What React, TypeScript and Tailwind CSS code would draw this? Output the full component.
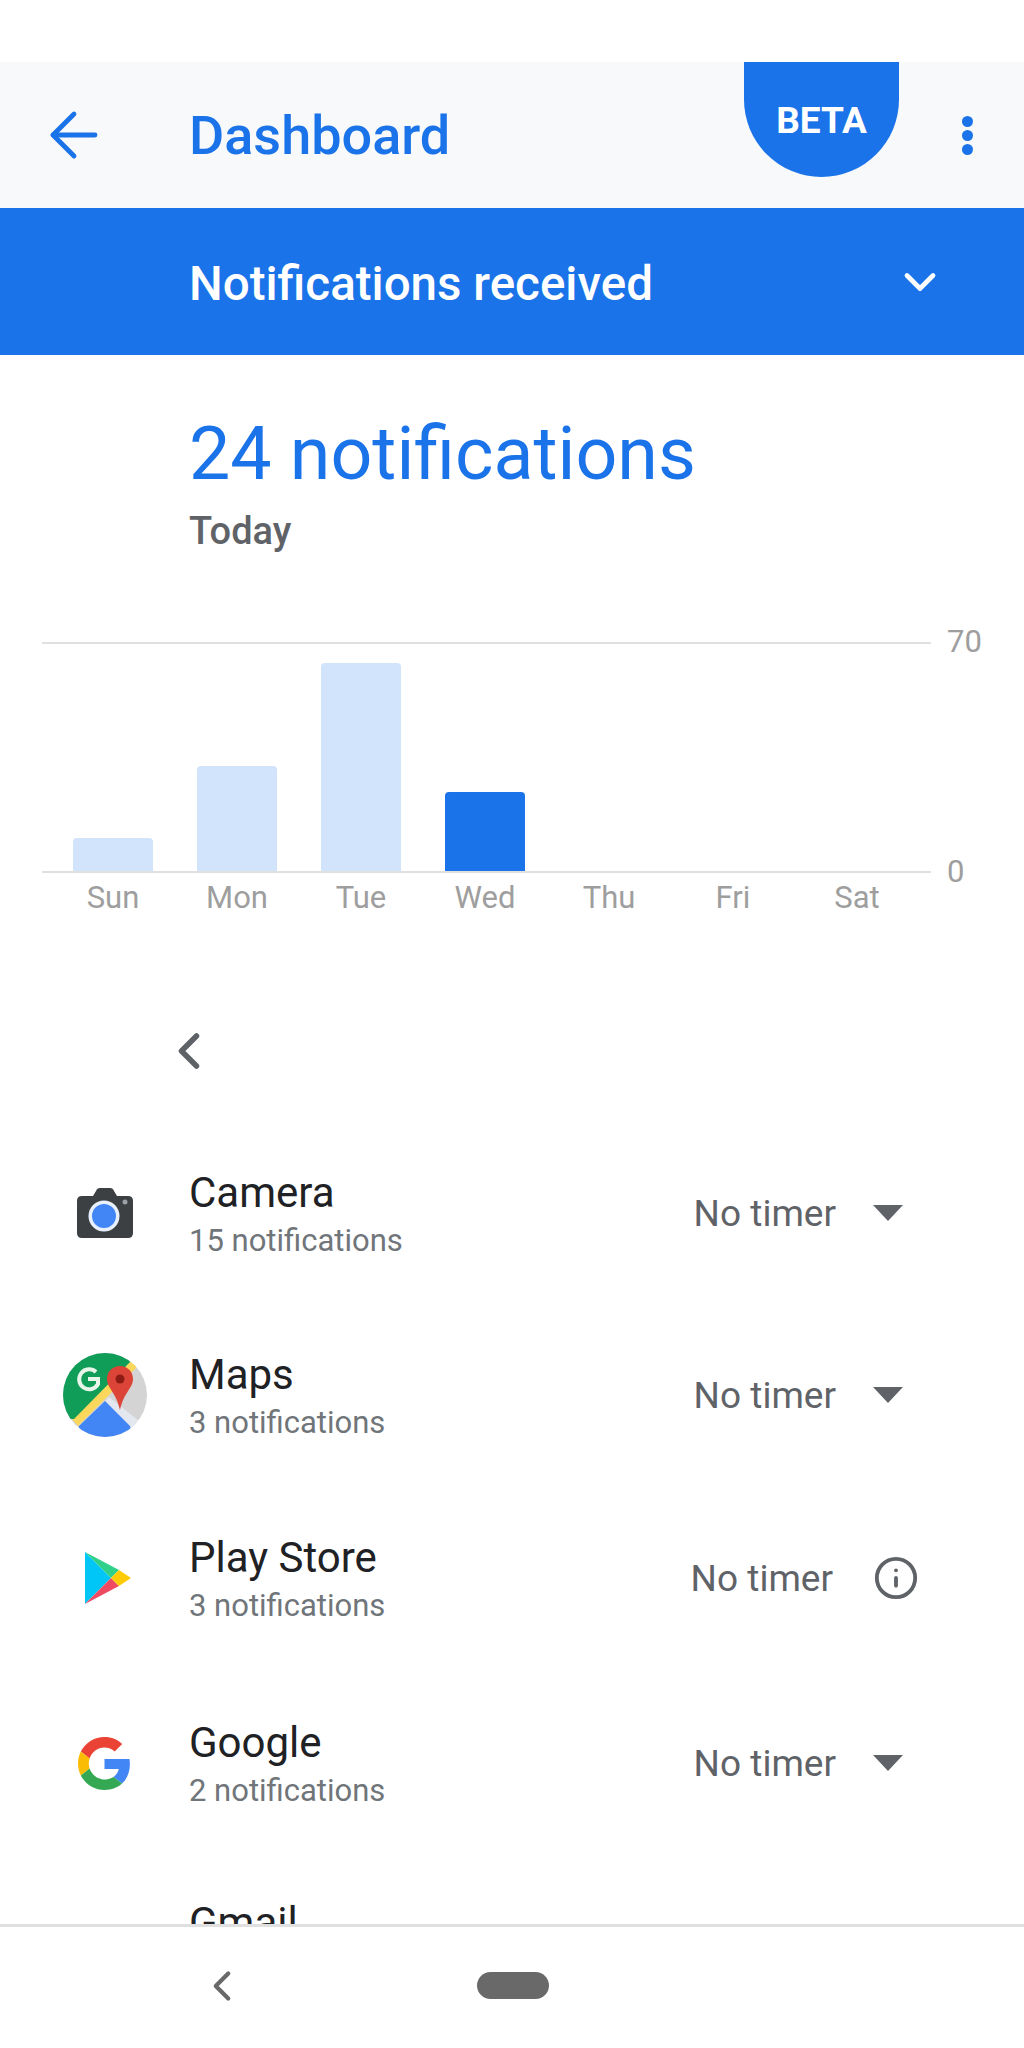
import { ArrowLeft, ChevronDown, ChevronLeft, Info } from 'lucide-react';

const days = [
  { label: 'Sun', height: 'h-[33px]', color: 'bg-[#d2e3fc]' },
  { label: 'Mon', height: 'h-[105px]', color: 'bg-[#d2e3fc]' },
  { label: 'Tue', height: 'h-[208px]', color: 'bg-[#d2e3fc]' },
  { label: 'Wed', height: 'h-[79px]', color: 'bg-[#1a73e8]' },
  { label: 'Thu', height: 'h-0', color: '' },
  { label: 'Fri', height: 'h-0', color: '' },
  { label: 'Sat', height: 'h-0', color: '' },
];

function CameraIcon() {
  return (
    <svg width="56" height="50" viewBox="0 0 56 50">
      <path
        d="M5 8h11l3-5q1-3 4-3h10q3 0 4 3l3 5h11q5 0 5 5v32q0 5-5 5H5q-5 0-5-5V13q0-5 5-5z"
        fill="#3c4043"
      />
      <circle cx="27" cy="28" r="15.5" fill="#e8f0fe" />
      <circle cx="27" cy="28" r="12" fill="#4285f4" />
      <circle cx="48" cy="14" r="2.5" fill="#9aa0a6" />
    </svg>
  );
}

function MapsIcon() {
  return (
    <svg width="84" height="84" viewBox="0 0 84 84">
      <defs>
        <clipPath id="maps-disc">
          <circle cx="42" cy="42" r="42" />
        </clipPath>
      </defs>
      <g clipPath="url(#maps-disc)">
        <rect width="84" height="84" fill="#d4d4d4" />
        <polygon points="42,48 46,44 76,68 68,76" fill="#e3e8f0" />
        <polygon points="42,48 67,73 70,84 14,84 16,73" fill="#4285f4" />
        <polygon points="68,8 74,14 15,73 9,66" fill="#fbd75b" />
        <polygon points="0,0 72,0 68,8 11,66 0,66" fill="#0f9d58" />
      </g>
      <path d="M33 19a10 10 0 1 0 2 12v-5h-10" fill="none" stroke="#e8f5e9" strokeWidth="4" />
      <path
        d="M57 13c-7.500 0-13 5.500-13 13 0 9 9.500 14 13 31 3.500-17 13-22 13-31 0-7.500-5.500-13-13-13z"
        fill="#db4437"
      />
      <circle cx="57" cy="26" r="4.500" fill="#8c1c13" />
    </svg>
  );
}

function PlayIcon() {
  return (
    <svg className="ml-[6px]" width="46" height="52" viewBox="0 0 46 52">
      <polygon points="0,0 0,52 26,26" fill="#00c6f7" />
      <polygon points="0,0 34,18 26,26" fill="#2fd08a" />
      <polygon points="0,52 26,26 34,34" fill="#ee4b62" />
      <polygon points="34,18 46,26 34,34 26,26" fill="#ffcb05" />
    </svg>
  );
}

function GoogleIcon() {
  return (
    <svg width="53" height="53" viewBox="0 0 48 48">
      <path
        fill="#EA4335"
        d="M24 9.5c3.54 0 6.71 1.22 9.21 3.6l6.85-6.85C35.9 2.38 30.47 0 24 0 14.62 0 6.51 5.38 2.56 13.22l7.98 6.19C12.43 13.72 17.74 9.5 24 9.5z"
      />
      <path
        fill="#4285F4"
        d="M46.98 24.55c0-1.57-.15-3.09-.38-4.55H24v9.02h12.94c-.58 2.96-2.26 5.48-4.78 7.18l7.73 6c4.51-4.18 7.09-10.36 7.09-17.65z"
      />
      <path
        fill="#FBBC05"
        d="M10.53 28.59c-.48-1.45-.76-2.99-.76-4.59s.27-3.14.76-4.59l-7.98-6.19C.92 16.46 0 20.12 0 24c0 3.88.92 7.54 2.56 10.78l7.97-6.19z"
      />
      <path
        fill="#34A853"
        d="M24 48c6.48 0 11.93-2.13 15.89-5.81l-7.73-6c-2.15 1.45-4.92 2.3-8.16 2.3-6.26 0-11.57-4.22-13.47-9.91l-7.98 6.19C6.51 42.62 14.62 48 24 48z"
      />
    </svg>
  );
}

function AppRow({
  icon,
  name,
  count,
  height,
  info,
}: {
  icon: React.ReactNode;
  name: string;
  count: string;
  height: string;
  info?: boolean;
}) {
  return (
    <div className={`flex shrink-0 items-center ${height}`}>
      <div className="flex w-[189px] shrink-0 justify-center pb-[6px] pl-[20px]">{icon}</div>
      <div className="flex flex-col">
        <span className="text-[42px] leading-[50px] text-[#202124]">{name}</span>
        <span className="text-[31px] leading-[46px] text-[#70757a]">{count}</span>
      </div>
      <div className="ml-auto flex items-center pb-[6px]">
        <span className="text-[37px] leading-none text-[#5f6368]">No timer</span>
        {info ? (
          <Info className="ml-[40px] mr-[105px] h-[46px] w-[46px] text-[#5f6368]" strokeWidth={2} />
        ) : (
          <div className="ml-[37px] mr-[121px] h-0 w-0 border-x-[15px] border-t-[16px] border-x-transparent border-t-[#5f6368]" />
        )}
      </div>
    </div>
  );
}

export default function App() {
  return (
    <div className="flex h-[2048px] w-[1024px] flex-col overflow-hidden bg-white font-['Roboto',sans-serif]">
      <div className="h-[62px] shrink-0" />

      {/* Top bar */}
      <header className="flex h-[146px] shrink-0 items-center bg-[#f8f9fa]">
        <div className="flex w-[189px] shrink-0 pl-[38px]">
          <ArrowLeft className="h-[72px] w-[72px] text-[#1a73e8]" strokeWidth={1.6} />
        </div>
        <h1 className="text-[54px] font-medium text-[#1a73e8]">Dashboard</h1>
        <div className="ml-auto flex h-[115px] w-[155px] shrink-0 items-start justify-center self-start rounded-b-[78px] bg-[#1a73e8] pt-[37px]">
          <span className="text-[37px] leading-[44px] font-bold text-white">BETA</span>
        </div>
        <div className="flex w-[125px] shrink-0 flex-col items-center gap-[3px] pl-[11px]">
          <div className="h-[11px] w-[11px] rounded-full bg-[#1a73e8]" />
          <div className="h-[11px] w-[11px] rounded-full bg-[#1a73e8]" />
          <div className="h-[11px] w-[11px] rounded-full bg-[#1a73e8]" />
        </div>
      </header>

      {/* Metric selector */}
      <div className="flex h-[147px] shrink-0 items-center bg-[#1a73e8] pl-[189px]">
        <span className="pt-[7px] text-[47.500px] font-medium text-white">Notifications received</span>
        <ChevronDown className="ml-auto mr-[78px] h-[52px] w-[52px] text-white" strokeWidth={2.2} />
      </div>

      {/* Summary */}
      <div className="flex h-[287px] shrink-0 flex-col pl-[189px] pt-[58px]">
        <span className="text-[73.500px] leading-[82px] text-[#1a73e8]">24 notifications</span>
        <span className="mt-[14px] text-[38px] leading-[44px] font-medium text-[#5f6368]">Today</span>
      </div>

      {/* Chart */}
      <div className="flex h-[275px] shrink-0 pl-[42px]">
        <div className="flex w-[889px] shrink-0 flex-col">
          <div className="flex h-[231px] shrink-0 items-end gap-[44px] border-y-2 border-[#e0e0e0] pl-[31px]">
            {days.map((day) => (
              <div key={day.label} className={`w-[80px] rounded-t-[4px] ${day.height} ${day.color}`} />
            ))}
          </div>
          <div className="mt-[8px] flex gap-[44px] pl-[31px]">
            {days.map((day) => (
              <span key={day.label} className="w-[80px] text-center text-[31px] leading-[34px] text-[#9e9e9e]">
                {day.label}
              </span>
            ))}
          </div>
        </div>
        <div className="-mt-[17px] ml-[16px] flex h-[264px] flex-col justify-between text-[31px] leading-[34px] text-[#9e9e9e]">
          <span>70</span>
          <span>0</span>
        </div>
      </div>

      {/* Day pager */}
      <div className="flex h-[208px] shrink-0 items-start pl-[159px] pt-[104px]">
        <ChevronLeft className="h-[60px] w-[60px] text-[#5f6368]" strokeWidth={2.2} />
      </div>

      {/* App list */}
      <div className="flex min-h-0 flex-1 flex-col overflow-hidden">
        <AppRow height="h-[182px]" icon={<CameraIcon />} name="Camera" count="15 notifications" />
        <AppRow height="h-[182px]" icon={<MapsIcon />} name="Maps" count="3 notifications" />
        <AppRow height="h-[184px]" icon={<PlayIcon />} name="Play Store" count="3 notifications" info />
        <AppRow height="h-[186px]" icon={<GoogleIcon />} name="Google" count="2 notifications" />
        <div className="shrink-0 pl-[189px] pt-[39px] text-[42px] leading-[50px] text-[#202124]">Gmail</div>
      </div>

      {/* Nav bar */}
      <nav className="flex h-[124px] shrink-0 items-center border-t-[3px] border-[#e0e0e0] bg-white pb-[4px]">
        <div className="flex w-[477px] shrink-0 pl-[197px]">
          <ChevronLeft className="h-[50px] w-[50px] text-[#696969]" strokeWidth={2} />
        </div>
        <div className="h-[27px] w-[72px] rounded-full bg-[#696969]" />
      </nav>
    </div>
  );
}
